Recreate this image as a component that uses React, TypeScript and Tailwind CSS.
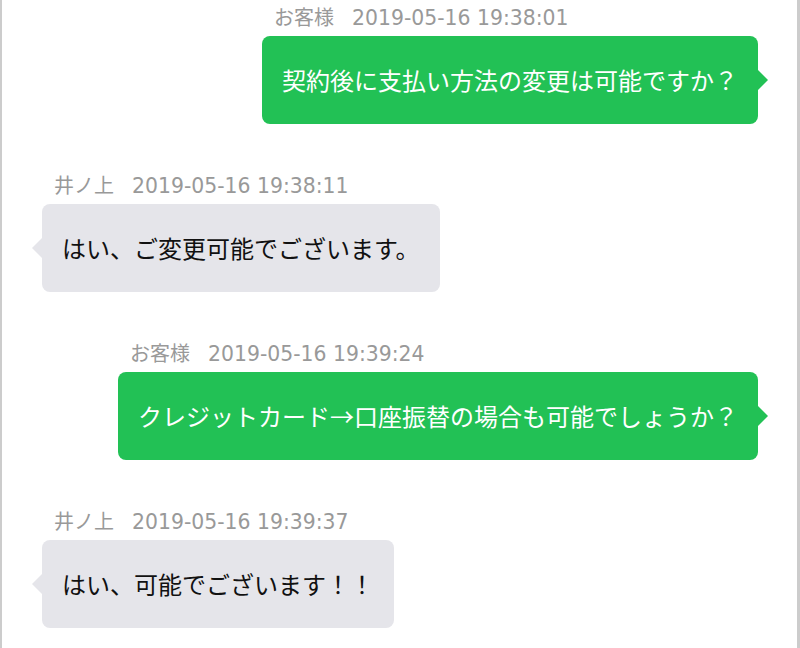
const messages = [
  { mine: true, name: "お客様", time: "2019-05-16 19:38:01", text: "契約後に支払い方法の変更は可能ですか？" },
  { mine: false, name: "井ノ上", time: "2019-05-16 19:38:11", text: "はい、ご変更可能でございます。" },
  { mine: true, name: "お客様", time: "2019-05-16 19:39:24", text: "クレジットカード→口座振替の場合も可能でしょうか？" },
  { mine: false, name: "井ノ上", time: "2019-05-16 19:39:37", text: "はい、可能でございます！！" },
];

function Tail({ mine }: { mine: boolean }) {
  return (
    <svg
      width="10"
      height="20"
      viewBox="0 0 10 20"
      className={`absolute top-1/2 -translate-y-1/2 ${mine ? "left-full" : "right-full"}`}
    >
      {mine ? (
        <polygon points="0,0 10,10 0,20" fill="#22c155" />
      ) : (
        <polygon points="10,0 0,10 10,20" fill="#e5e5ea" />
      )}
    </svg>
  );
}

function Message({ mine, name, time, text }: (typeof messages)[number]) {
  return (
    <div className={`flex flex-col ${mine ? "self-end" : "self-start"}`}>
      <p className="flex h-5 items-baseline gap-[18px] pl-3 text-[20px] leading-5 whitespace-nowrap text-[#999]">
        <span>{name}</span>
        <span className="font-['DejaVu_Sans'] text-[20.4px]">{time}</span>
      </p>
      <div
        className={`relative mt-[9px] flex h-[88px] items-center rounded-lg px-5 text-[24px] leading-none whitespace-nowrap ${
          mine ? "bg-[#22c155] text-white" : "bg-[#e5e5ea] text-[#111]"
        }`}
      >
        {text}
        <Tail mine={mine} />
      </div>
    </div>
  );
}

export default function App() {
  return (
    <div
      className="min-h-screen w-full border-l-2 border-r-[3px] border-[#cccccc] bg-white"
      style={{ fontFamily: '"Noto Sans CJK JP", "Noto Sans", sans-serif' }}
    >
      <div className="flex flex-col gap-[51px] pl-[40px] pr-[39px] pt-[7px]">
        {messages.map((m, i) => (
          <Message key={i} {...m} />
        ))}
      </div>
    </div>
  );
}
